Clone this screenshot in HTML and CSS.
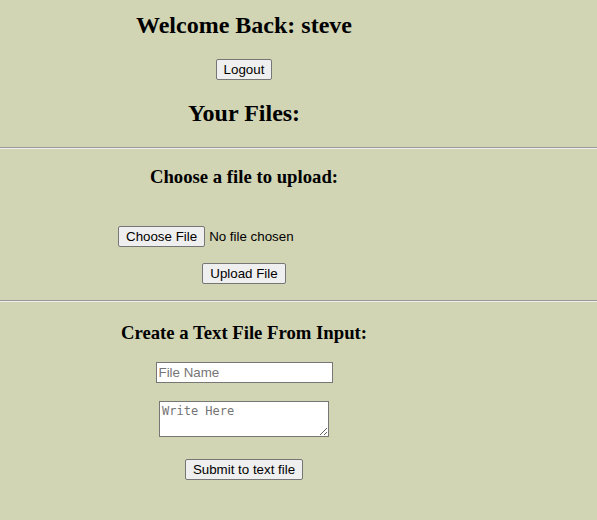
FILE: index.html
```html
<!DOCTYPE html>
<html lang="en">
<head>
<meta charset="utf-8">
<title>Your Files</title>
<link rel="stylesheet" href="styles.css">
</head>
<body>
<section class="panel panel-top">
  <h2 class="welcome">Welcome Back: steve</h2>
  <button class="btn logout" type="button">Logout</button>
  <h2 class="files-title">Your Files:</h2>
</section>
<hr class="rule">
<section class="panel panel-upload">
  <h3 class="sub-title">Choose a file to upload:</h3>
  <input class="file-input" type="file">
  <button class="btn upload" type="button">Upload File</button>
</section>
<hr class="rule">
<section class="panel panel-create">
  <h3 class="sub-title">Create a Text File From Input:</h3>
  <input class="name-input" type="text" placeholder="File Name">
  <textarea class="text-input" placeholder="Write Here"></textarea>
  <button class="btn submit" type="button">Submit to text file</button>
</section>
</body>
</html>
```

FILE: styles.css
```css
html, body {
  margin: 0;
  padding: 0;
}
body {
  background: #d1d5b4;
  font-family: "Liberation Serif", "Times New Roman", serif;
  color: #000;
}
.panel {
  width: 488px;
  display: flex;
  flex-direction: column;
  align-items: center;
  text-align: center;
}
.welcome, .files-title {
  font-size: 24px;
  font-weight: bold;
  margin: 0;
  line-height: 27px;
}
.welcome { margin-top: 12px; }
.logout { margin-top: 20px; }
.files-title { margin-top: 20px; }
.panel-top { padding-bottom: 20px; }

.rule {
  margin: 0;
  border: 0;
  border-top: 1px solid #9a9a9a;
  border-bottom: 1px solid #eeeeee;
  height: 0;
}

.sub-title {
  font-size: 18.72px;
  font-weight: bold;
  margin: 0;
  line-height: 21px;
}
.panel-upload .sub-title { margin-top: 17px; }
.file-input {
  margin-top: 39px;
  width: 252px;
  font-family: "Liberation Sans", Arial, sans-serif;
  font-size: 13.333px;
  color: #000;
}
.file-input::file-selector-button {
  font-family: "Liberation Sans", Arial, sans-serif;
  font-size: 13.333px;
  background: #efefef;
  border: 1px solid #767676;
  border-radius: 2px;
  padding: 1px 7px;
  margin-right: 4px;
  color: #000;
  height: 21px;
}
.upload { margin-top: 16px; }
.panel-upload { padding-bottom: 16px; }

.btn {
  font-family: "Liberation Sans", Arial, sans-serif;
  font-size: 13.333px;
  background: #efefef;
  border: 1px solid #767676;
  border-radius: 2px;
  padding: 1px 7px;
  color: #000;
  height: 21px;
  box-sizing: border-box;
  line-height: 17px;
}

.panel-create .sub-title { margin-top: 20px; }
.name-input {
  margin-top: 19px;
  width: 177px;
  height: 21px;
  box-sizing: border-box;
  font-family: "Liberation Sans", Arial, sans-serif;
  font-size: 13.333px;
  padding: 1px 2px;
  border: 1px solid #767676;
  background: #fff;
}
.name-input::placeholder { color: #757575; }
.text-input {
  margin-top: 18px;
  width: 170px;
  height: 36px;
  box-sizing: border-box;
  font-family: "DejaVu Sans Mono", "Liberation Mono", monospace;
  font-size: 12px;
  padding: 2px;
  border: 1px solid #767676;
  background: #fff;
}
.text-input::placeholder { color: #757575; }
.submit { margin-top: 22px; }
```
